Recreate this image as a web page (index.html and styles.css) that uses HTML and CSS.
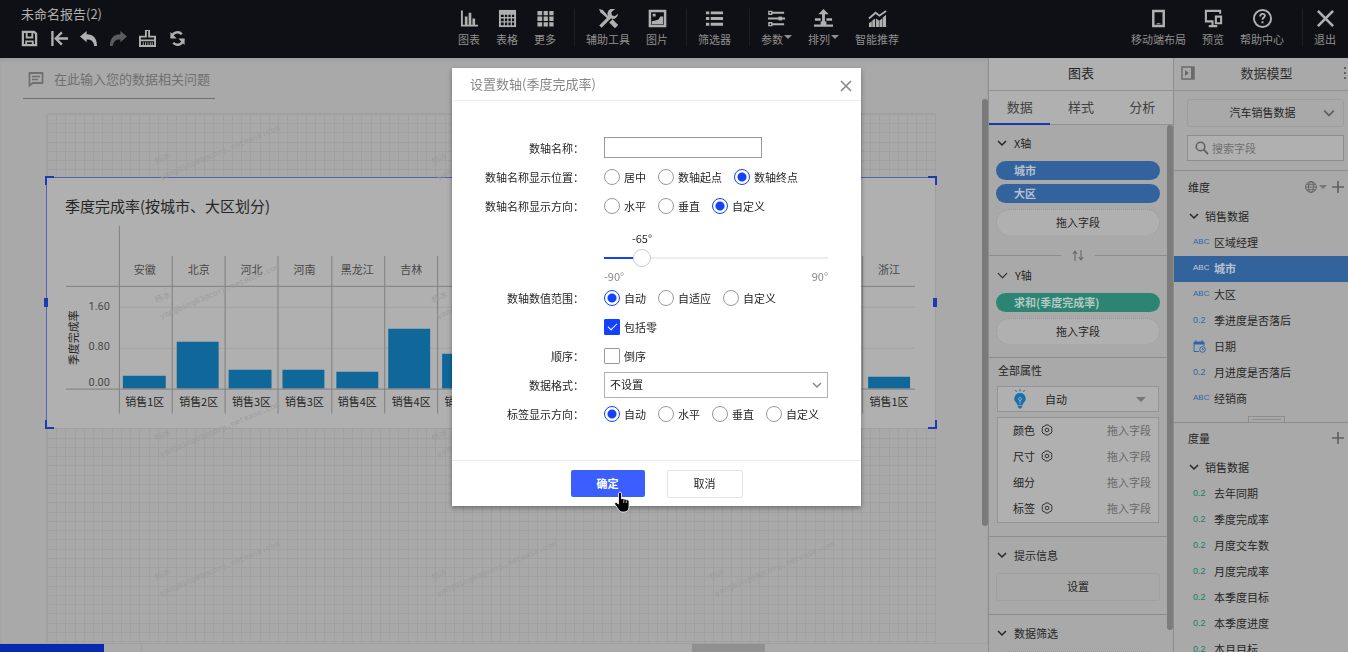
FILE: index.html
```html
<!DOCTYPE html>
<html lang="zh-CN">
<head>
<meta charset="utf-8">
<title>未命名报告(2)</title>
<link rel="stylesheet" href="styles.css">
</head>
<body>
<svg class="defs" aria-hidden="true">
  <symbol id="chev" viewBox="0 0 10 10"><path d="M1 3l4 4 4-4" fill="none" stroke="currentColor" stroke-width="1.500"/></symbol>
  <symbol id="gear" viewBox="0 0 12 12"><g fill="none" stroke="currentColor"><path d="M4.400 1h3.200l.9 1.300 1.600.4.9 2L10.500 6l.5 1.300-.9 2-1.600.4L7.600 11H4.400l-.9-1.300-1.600-.4-.9-2L1.500 6 1 4.700l.9-2 1.600-.4z" stroke-width=".9"/><circle cx="6" cy="6" r="1.800" stroke-width=".9"/></g></symbol>
  <symbol id="cal" viewBox="0 0 13 13"><path d="M1 2h10v2H1zM3 0v3M9 0v3" fill="currentColor" stroke="currentColor"/><path d="M1 4v7.500h5M11 4v2" fill="none" stroke="currentColor"/><circle cx="9.500" cy="9.500" r="2.800" fill="none" stroke="currentColor"/><path d="M9.500 8v1.500H11" fill="none" stroke="currentColor" stroke-width=".8"/></symbol>
</svg>
<div class="app">
  <header class="topbar">
    <div class="report">
      <h1>未命名报告(2)</h1>
      <div class="quick">
        <button aria-label="保存"><svg viewBox="0 0 18 18"><path d="M2 2h12l2 2v12H2z" fill="none" stroke="currentColor" stroke-width="2.400"/><path d="M6 2v6h6V2M5.500 16v-4h7v4" fill="none" stroke="currentColor" stroke-width="2"/></svg></button>
        <button aria-label="回到初始"><svg viewBox="0 0 18 18"><path d="M1.500 1v16M18 9H5M11.500 2.500L5 9l6.500 6.500" fill="none" stroke="currentColor" stroke-width="2.500"/></svg></button>
        <button aria-label="撤销"><svg viewBox="0 0 18 18"><path d="M0 7l7-6v3.500c7 0 11 4 11 12.500h-3C14.500 12 12 10 7 10v3z" fill="currentColor"/></svg></button>
        <button class="dim" aria-label="重做"><svg viewBox="0 0 18 18"><path d="M18 7l-7-6v3.500C4 4.500 0 8.500 0 17h3C3.500 12 6 10 11 10v3z" fill="currentColor"/></svg></button>
        <button aria-label="清空"><svg viewBox="0 0 18 18"><path d="M7.300 0h3.400v7H17v4H1V7h6.300zM1 11h16v6H1z" fill="none" stroke="currentColor" stroke-width="2"/><path d="M4.500 13v3M7 13v3M9.500 13v3M12 13v3M14 13v3" stroke="currentColor"/></svg></button>
        <button aria-label="刷新"><svg viewBox="0 0 18 18"><path d="M3 8.500a6 6 0 0 1 10.500-4M15 9.500a6 6 0 0 1-10.500 4" fill="none" stroke="currentColor" stroke-width="2.600"/><path d="M1.500 2v7h6.500zM16.500 16V9H10z" fill="currentColor"/></svg></button>
      </div>
    </div>
    <nav class="tools">
      <div class="group">
        <button><svg viewBox="0 0 20 20"><path d="M2 1.500v16h17" fill="none" stroke="currentColor" stroke-width="2"/><path d="M6.500 8v9M10.500 4v13M14.500 10v7" stroke="currentColor" stroke-width="2.800"/></svg>图表</button>
        <button><svg viewBox="0 0 20 20"><path d="M1 1h18v18H1z" fill="currentColor"/><path d="M3 6h3v2.500H3zM7.300 6h2.400v2.500H7.300zM11 6h2.400v2.500H11zM14.700 6H17v2.500h-2.300zM3 10h3v2.800H3zM7.300 10h2.400v2.800H7.300zM11 10h2.400v2.800H11zM14.700 10H17v2.800h-2.300zM3 14.300h3V17H3zM7.300 14.300h2.400V17H7.300zM11 14.300h2.400V17H11zM14.700 14.300H17V17h-2.300z" fill="#0f1015"/></svg>表格</button>
        <button><svg viewBox="0 0 20 20"><path d="M1.500 2h5v4.500h-5zM8 2h4.500v4.500H8zM14 2h4.500v4.500H14zM1.500 8h5v4.500h-5zM8 8h4.500v4.500H8zM14 8h4.500v4.500H14zM1.500 14h5v4.500h-5zM8 14h4.500v4.500H8zM14 14h4.500v4.500H14z" fill="currentColor"/></svg>更多</button>
      </div>
      <div class="group">
        <button><svg viewBox="0 0 20 20"><path d="M0 0l4 1 7 8-1.500 1.500-8-7z" fill="currentColor"/><path d="M1.500 18.500L13 7" stroke="currentColor" stroke-width="3.400"/><path d="M12.500 12.500l6 6" stroke="currentColor" stroke-width="5"/><path d="M17 0a5.500 5.500 0 1 0 3 5l-3.500 2.500-3-1-.5-3z" fill="currentColor"/></svg>辅助工具</button>
        <button><svg viewBox="0 0 20 20"><path d="M2 2h16v16H2z" fill="none" stroke="currentColor" stroke-width="2.600"/><path d="M5 5h3v3H5zM4 16v-3l4-1 3-1 2-3h3v8z" fill="currentColor"/></svg>图片</button>
      </div>
      <div class="group">
        <button><svg viewBox="0 0 20 20"><path d="M1 4h3.500M6 4h13M1 10h3.500M6 10h13M1 16h3.500M6 16h13" stroke="currentColor" stroke-width="3"/></svg>筛选器</button>
      </div>
      <div class="group">
        <button><svg viewBox="0 0 20 20"><path d="M5 4h13M1 10h18M5 16h13" stroke="currentColor" stroke-width="2"/><path d="M2 2.500h3v3H2zM2 14.500h3v3H2z" fill="#0f1015" stroke="currentColor" stroke-width="1.500"/><path d="M12 8h4v4h-4z" fill="currentColor"/></svg><span class="more">参数</span></button>
        <button><svg viewBox="0 0 20 20"><path d="M10 0l5.500 5.500h-4V14h-3V5.500h-4z" fill="currentColor"/><path d="M1 11h6M13 11h6M0 17.500h20" stroke="currentColor" stroke-width="2.600"/><path d="M7 13h6v4H7z" fill="currentColor"/></svg><span class="more">排列</span></button>
        <button><svg viewBox="0 0 20 20"><path d="M1 10l7-6 4 3 7-5" fill="none" stroke="currentColor" stroke-width="2"/><path d="M1 19v-4l3-2v6zM4.500 19v-7l3-2v9zM8.500 19v-9l3 2v7zM12 19v-7l3-2v9zM15.500 19V9L19 6v13z" fill="currentColor"/></svg>智能推荐</button>
      </div>
    </nav>
    <div class="tools tools-end">
      <div class="group">
        <button><svg viewBox="0 0 20 20"><path d="M4.500 2h11v16h-11z" fill="none" stroke="currentColor" stroke-width="2.600"/><path d="M8 15.500h4" stroke="currentColor"/></svg>移动端布局</button>
        <button><svg viewBox="0 0 20 20"><path d="M17 5V2H2v11h8M5 18h9M9 13v5" fill="none" stroke="currentColor" stroke-width="2.200"/><path d="M12.500 8h5.500v7h-5.500z" fill="none" stroke="currentColor" stroke-width="2.200"/></svg>预览</button>
        <button><svg viewBox="0 0 20 20"><circle cx="10" cy="10" r="9" fill="none" stroke="currentColor" stroke-width="2"/><path d="M7.500 8c0-4 5-3.500 5-.8 0 1.800-2.500 1.800-2.500 4M10 13v2" fill="none" stroke="currentColor" stroke-width="2"/></svg>帮助中心</button>
      </div>
      <div class="group">
        <button><svg viewBox="0 0 20 20"><path d="M2 2l16 16M18 2L2 18" stroke="currentColor" stroke-width="2.800"/></svg>退出</button>
      </div>
    </div>
  </header>

  <div class="work">
    <main class="stage">
      <label class="ask">
        <svg viewBox="0 0 16 16"><path d="M1.500 2h13v10H5l-3.500 2.500z" fill="none" stroke="currentColor" stroke-width="1.800"/><path d="M4 5.500h8M4 8.500h6" stroke="currentColor" stroke-width="1.500"/></svg>
        <input type="text" placeholder="在此输入您的数据相关问题" aria-label="数据相关问题">
      </label>
      <div class="sheet">
        <section class="widget">
          <h2>季度完成率(按城市、大区划分)</h2>
          <svg class="chart" viewBox="1 0 890 202" role="img" aria-label="季度完成率">
            <g stroke="#a3a3a3"><path d="M73 81.500h798M73 122.500h798"/></g>
            <g fill="#10689a">
              <path d="M77 150h43v13H77zM131 116h42v47h-42zM183 144h43v19h-43zM237 144h42v19h-42zM291 146h42v17h-42zM343 103h42v60h-42zM397 128h42v35h-42zM824 151h42v12h-42z"/>
            </g>
            <g stroke="#808080"><path d="M20 60.500h851M20 163.500h851M73.500 0v188M126.500 30v158M179.500 30v158M232.500 30v158M286.500 30v158M339.500 30v158M392.500 30v158M818.500 30v158" fill="none"/></g>
            <g class="names" text-anchor="middle">
              <text x="99" y="48">安徽</text><text x="153" y="48">北京</text><text x="206" y="48">河北</text><text x="259" y="48">河南</text><text x="312" y="48">黑龙江</text><text x="366" y="48">吉林</text><text x="845" y="48">浙江</text>
            </g>
            <g class="zones" text-anchor="middle">
              <text x="99" y="180">销售1区</text><text x="153" y="180">销售2区</text><text x="206" y="180">销售3区</text><text x="259" y="180">销售3区</text><text x="312" y="180">销售4区</text><text x="366" y="180">销售4区</text><text x="419" y="180">销售1区</text><text x="845" y="180">销售1区</text>
            </g>
            <g class="ticks" text-anchor="end"><text x="64" y="84">1.60</text><text x="64" y="124">0.80</text><text x="64" y="160">0.00</text></g>
            <text class="axis" text-anchor="middle" transform="translate(32 112) rotate(-90)">季度完成率</text>
          </svg>
          <i class="grip tl"></i><i class="grip tr"></i><i class="grip bl"></i><i class="grip br"></i><i class="grip ml"></i><i class="grip mr"></i>
        </section>
        <svg class="marks" aria-hidden="true">
          <defs><g id="wm"><text class="wm-name" transform="translate(9 53) rotate(-23)">杨冰</text><text class="wm-mail" transform="translate(14 69) rotate(-23)">yangbing03@corp.netease.com</text></g></defs>
          <use href="#wm" x="100" y="-3"/><use href="#wm" x="377" y="-3"/><use href="#wm" x="655" y="-3"/>
          <use href="#wm" x="100" y="136"/><use href="#wm" x="377" y="136"/><use href="#wm" x="655" y="136"/>
          <use href="#wm" x="100" y="274"/><use href="#wm" x="377" y="274"/><use href="#wm" x="655" y="274"/>
          <use href="#wm" x="100" y="413"/><use href="#wm" x="377" y="413"/><use href="#wm" x="655" y="413"/>
        </svg>
      </div>
      <div class="sheetbar"><span class="current"></span><span class="sheet-tab"></span><span class="hthumb"></span></div>
      <i class="vthumb"></i>
    </main>

    <aside class="panel config">
      <h2 class="panel-title">图表</h2>
      <div class="tabs" role="tablist"><button class="on" role="tab">数据</button><button role="tab">样式</button><button role="tab">分析</button></div>
      <div class="scroll">
        <section class="axes">
          <h3><svg><use href="#chev"/></svg>X轴</h3>
          <button class="pill">城市</button>
          <button class="pill">大区</button>
          <button class="drop">拖入字段</button>
          <div class="swap"><svg viewBox="0 0 12 11"><path d="M3 11V1.500M.8 4L3 1.200 5.200 4M9 0v9.500M6.800 7L9 9.800 11.200 7" fill="none" stroke="currentColor" stroke-width="1.100"/></svg></div>
          <h3>Y轴</h3>
          <button class="pill measure">求和(季度完成率)</button>
          <button class="drop">拖入字段</button>
        </section>
        <section class="props">
          <h3>全部属性</h3>
          <div class="kind">
            <svg viewBox="0 0 14 20"><path d="M7 4a5.600 5.600 0 0 1 3.300 10.200l-.6 2H4.300l-.6-2A5.600 5.600 0 0 1 7 4z" fill="#1a6fb0"/><path d="M4.500 17h5l-1.500 2.500H6z" fill="#1a6fb0"/><path d="M7 0v2.500M2.500 1l1 2M11.500 1l-1 2" stroke="#1a6fb0"/><path d="M7 15v-4M5.500 10a1.500 1.500 0 1 1 3 0 1.500 1.500 0 0 1-3 0" fill="none" stroke="#b0b0b0" stroke-width=".8"/></svg>
            <select aria-label="图表类型"><option>自动</option></select>
          </div>
          <ul class="marksbox">
            <li>颜色<svg><use href="#gear"/></svg><span>拖入字段</span></li>
            <li>尺寸<svg><use href="#gear"/></svg><span>拖入字段</span></li>
            <li>细分<span>拖入字段</span></li>
            <li>标签<svg><use href="#gear"/></svg><span>拖入字段</span></li>
          </ul>
        </section>
        <section>
          <h3><svg><use href="#chev"/></svg>提示信息</h3>
          <button class="set">设置</button>
        </section>
        <section>
          <h3><svg><use href="#chev"/></svg>数据筛选</h3>
          <button class="drop" aria-label="数据筛选"></button>
        </section>
        <i class="pthumb"></i>
      </div>
    </aside>

    <aside class="panel model">
      <div class="panel-title">
        <svg class="fold" viewBox="0 0 14 14"><path d="M1 1h12v12H1z" fill="none" stroke="currentColor" stroke-width="1.400"/><path d="M10 1h3v12h-3zM4 4l4 3-4 3z" fill="currentColor"/></svg>
        <h2>数据模型</h2>
        <svg class="dots" viewBox="0 0 3 12"><path d="M0 0h2v2H0zM0 5h2v2H0zM0 10h2v2H0z" fill="currentColor"/></svg>
      </div>
      <div class="source">
        <div class="dataset"><select aria-label="数据模型"><option>汽车销售数据</option></select><svg><use href="#chev"/></svg></div>
        <div class="find"><svg viewBox="0 0 14 14"><circle cx="5.500" cy="5.500" r="4.300" fill="none" stroke="currentColor" stroke-width="1.500"/><path d="M8.700 8.700L13 13" stroke="currentColor" stroke-width="1.800"/></svg><input type="search" placeholder="搜索字段" aria-label="搜索字段"></div>
      </div>
      <section class="dims">
        <header><h3>维度</h3>
          <svg class="globe" viewBox="0 0 12 12"><g fill="none" stroke="currentColor" stroke-width=".9"><circle cx="6" cy="6" r="5.400"/><ellipse cx="6" cy="6" rx="2.500" ry="5.400"/><path d="M.6 6h10.800M1.500 3.300h9M1.500 8.700h9"/></g></svg>
          <i class="tri"></i>
          <svg class="plus" viewBox="0 0 12 12"><path d="M6 0v12M0 6h12" stroke="currentColor" stroke-width="1.600"/></svg>
        </header>
        <h4><svg><use href="#chev"/></svg>销售数据</h4>
        <ul>
          <li><b>ABC</b>区域经理</li>
          <li class="sel"><b>ABC</b>城市</li>
          <li><b>ABC</b>大区</li>
          <li><b class="num">0.2</b>季进度是否落后</li>
          <li><b><svg><use href="#cal"/></svg></b>日期</li>
          <li><b class="num">0.2</b>月进度是否落后</li>
          <li><b>ABC</b>经销商</li>
        </ul>
        <i class="handle"></i>
      </section>
      <section class="facts">
        <header><h3>度量</h3><svg class="plus" viewBox="0 0 12 12"><path d="M6 0v12M0 6h12" stroke="currentColor" stroke-width="1.600"/></svg></header>
        <h4><svg><use href="#chev"/></svg>销售数据</h4>
        <ul>
          <li><b class="num">0.2</b>去年同期</li>
          <li><b class="num">0.2</b>季度完成率</li>
          <li><b class="num">0.2</b>月度交车数</li>
          <li><b class="num">0.2</b>月度完成率</li>
          <li><b class="num">0.2</b>本季度目标</li>
          <li><b class="num">0.2</b>本季度进度</li>
          <li><b class="num">0.2</b>本月目标</li>
        </ul>
      </section>
    </aside>
  </div>
</div>

<div class="overlay">
  <form class="dialog" role="dialog" aria-labelledby="dlg-title">
    <header><h2 id="dlg-title">设置数轴(季度完成率)</h2>
      <button type="button" class="close" aria-label="关闭"><svg viewBox="0 0 12 12"><path d="M1 1l10 10M11 1L1 11" stroke="currentColor" stroke-width="1.600"/></svg></button></header>
    <div class="fields">
      <div class="row"><label for="axis-name">数轴名称：</label><div class="ctl"><input id="axis-name" class="name" type="text"></div></div>
      <div class="row"><span>数轴名称显示位置：</span><div class="ctl">
        <label><input type="radio" name="pos">居中</label><label><input type="radio" name="pos">数轴起点</label><label><input type="radio" name="pos" checked>数轴终点</label></div></div>
      <div class="row"><span>数轴名称显示方向：</span><div class="ctl">
        <label><input type="radio" name="dir">水平</label><label><input type="radio" name="dir">垂直</label><label><input type="radio" name="dir" checked>自定义</label></div></div>
      <div class="row slide"><span></span><div class="slider">
        <output for="angle">-65°</output>
        <input id="angle" type="range" min="-90" max="90" value="-65" aria-label="角度">
        <div class="ends"><span>-90°</span><span>90°</span></div></div></div>
      <div class="row"><span>数轴数值范围：</span><div class="ctl">
        <label><input type="radio" name="range" checked>自动</label><label><input type="radio" name="range">自适应</label><label><input type="radio" name="range">自定义</label></div></div>
      <div class="row"><span></span><div class="ctl"><label><input type="checkbox" checked>包括零</label></div></div>
      <div class="row"><span>顺序：</span><div class="ctl"><label><input type="checkbox">倒序</label></div></div>
      <div class="row"><label for="fmt">数据格式：</label><div class="ctl pick"><select id="fmt"><option>不设置</option></select><svg><use href="#chev"/></svg></div></div>
      <div class="row"><span>标签显示方向：</span><div class="ctl">
        <label><input type="radio" name="lab" checked>自动</label><label><input type="radio" name="lab">水平</label><label><input type="radio" name="lab">垂直</label><label><input type="radio" name="lab">自定义</label></div></div>
    </div>
    <footer>
      <div class="okwrap"><button type="button" class="ok">确定</button>
        <svg class="hand" viewBox="0 0 17 22"><path d="M5 1.500c1.500-.8 2.500 0 2.500 1.500v5c.8-.8 2-.7 2.500.3.800-.6 2-.3 2.300.7 1-.5 2.300 0 2.700 1v6c0 3-2 5-5 5H8c-1.500 0-2.500-1-3.500-2.500L1 13.500c-.8-1.300.5-2.500 1.700-1.800L4.500 13V3c0-.7 0-1.200.5-1.500z" fill="#000" stroke="#fff" stroke-width=".8"/><path d="M9.800 8.500V12M12.300 9.500V12" stroke="#fff" stroke-width=".7"/></svg></div>
      <button type="button" class="cancel">取消</button>
    </footer>
  </form>
</div>
</body>
</html>
```
FILE: styles.css
```css
* { box-sizing: border-box; margin: 0; padding: 0; }
html, body { height: 100%; overflow: hidden; }
body { font: 11px/16px "Noto Sans CJK SC", "Noto Sans", sans-serif; color: #262626; background: #a9a9a9; }
button, input, select { font: inherit; color: inherit; background: none; border: 0; border-radius: 0; outline: 0; }
select, input[type=search] { appearance: none; }
h1, h2, h3, h4 { font-weight: 400; font-size: inherit; }
ul { list-style: none; }
svg { display: block; flex: none; }
i { display: block; }
.defs { position: absolute; width: 0; height: 0; }

.app { height: 100vh; display: flex; flex-direction: column; }

/* top bar */
.topbar { flex: none; display: grid; grid-template-columns: 1fr auto 1fr; height: 58px; padding: 0 12px 0 21px; background: #0f1015; color: #b0b0b0; }
.report { padding-top: 4px; }
.report h1 { font-size: 13px; line-height: 20px; }
.quick { display: flex; justify-content: space-between; width: 165px; padding-top: 6px; }
.quick button { width: 17px; height: 17px; }
.quick svg { width: 17px; height: 17px; }
.quick .dim { color: #5c5c5e; }
.tools { display: flex; padding-top: 9px; }
.tools-end { justify-content: flex-end; }
.group { display: flex; align-items: flex-start; gap: 16px; height: 37px; }
.group + .group { padding-left: 11px; margin-left: 18px; border-left: 1px solid #1d1e23; }
.group button { display: flex; flex-direction: column; align-items: center; gap: 3px; color: #8f8f8f; }
.group svg { width: 19px; height: 19px; color: #b0b0b0; }
.more { display: flex; gap: 1px; }
.more::after { content: ""; border: 4px solid transparent; border-top-color: #8f8f8f; border-bottom: 0; height: 4px; margin-top: 4px; }

.work { flex: 1; min-height: 0; display: flex; }

/* report canvas */
.stage { flex: 1; min-width: 0; position: relative; display: flex; flex-direction: column; box-shadow: inset 0 3px 3px #a0a0a0; }
.ask { display: flex; align-items: center; gap: 10px; align-self: flex-start; width: 192px; height: 41px; margin-left: 23px; padding: 2px 0 0 5px; border-bottom: 1px solid #707070; color: #707070; }
.ask svg { width: 16px; height: 16px; }
.ask input { flex: 1; min-width: 0; font-size: 13px; }
::placeholder { color: #707070; opacity: 1; }
.sheet { flex: 1; min-height: 0; position: relative; margin: 14px 52px 0 46px; padding-top: 63px; border: 1px solid #a0a0a0; border-width: 1px 1px 0; border-radius: 3px 3px 0 0;
  background-image: linear-gradient(90deg, #a1a1a1 1px, transparent 1px 9px, #a1a1a1 9px 10px, transparent 10px 18px, #a1a1a1 18px 19px, transparent 19px 28px, #a1a1a1 28px 29px, transparent 29px), linear-gradient(#a1a1a1 1px, transparent 1px 9px, #a1a1a1 9px 10px, transparent 10px 18px, #a1a1a1 18px 19px, transparent 19px 28px, #a1a1a1 28px 29px, transparent 29px);
  background-size: 37px 37px; }
.widget { position: relative; margin: 0 -1px; background: #b0b0b0; border: 1px solid #5064b0; border-right-color: #a0a0a0; border-bottom-color: #a0a0a0; }
.widget h2 { font-size: 15px; line-height: 20px; padding: 18px 18px 10px; }
.chart { width: 100%; height: auto; overflow: visible; }
.chart text { font-size: 11px; fill: #484848; }
.chart .zones text, .chart .axis { fill: #262626; }
.chart .ticks text { font-family: Roboto, sans-serif; font-size: 11px; }
.grip { position: absolute; width: 9px; height: 9px; border: 0 solid #1d3bb0; }
.tl { left: -2px; top: -2px; border-width: 2px 0 0 2px; }
.tr { right: -2px; top: -2px; border-width: 2px 2px 0 0; }
.bl { left: -2px; bottom: -1px; border-width: 0 0 2px 2px; }
.br { right: -2px; bottom: -1px; border-width: 0 2px 2px 0; }
.ml, .mr { width: 4px; background: #1d3bb0; top: 120px; }
.ml { left: -3px; }
.mr { right: -2px; }
.marks { position: absolute; left: 0; top: 0; width: 100%; height: 100%; pointer-events: none; }
.wm-name { font-size: 8px; fill: #9d9d9d; }
.wm-mail { font: 8px "Liberation Mono", monospace; fill: #9d9d9d; }
.sheetbar { flex: none; position: relative; display: flex; height: 9px; border-top: 1px solid #a2a2a2; background: #a9a9a9; }
.current { width: 104px; background: #0629b0; }
.sheet-tab { width: 38px; border-right: 1px solid #a0a0a0; }
.hthumb { position: absolute; left: 70%; width: 73px; height: 9px; background: #909090; }
.vthumb { position: absolute; right: 0; top: 41px; bottom: 126px; width: 6px; border-radius: 3px; background: #7a7a7a; }

/* side panels */
.panel { flex: none; border-left: 1px solid #8d8d8d; overflow: hidden; }
.config { width: 185px; display: flex; flex-direction: column; }
.panel-title { flex: none; height: 33px; line-height: 30px; font-size: 13px; text-align: center; background: #b0b0b0; border-bottom: 1px solid #929292; }
.tabs { flex: none; display: flex; height: 34px; border-bottom: 1px solid #929292; background: #b0b0b0; }
.tabs button { flex: 1; height: 34px; font-size: 13px; color: #404040; padding-bottom: 3px; }
.tabs .on { border-bottom: 2px solid #1935b0; padding-bottom: 1px; }
.scroll { flex: 1; min-height: 0; position: relative; overflow: hidden; }
.scroll section { padding: 8px 13px 13px 7px; border-bottom: 1px solid #8d8d8d; }
.scroll h3 { display: flex; align-items: center; gap: 7px; height: 20px; margin-bottom: 8px; padding: 0 0 1px 1px; }
.scroll h3 svg, h4 svg { width: 10px; height: 10px; }
.axes h3:not(:first-child)::before { content: ""; width: 6px; height: 6px; margin: -3px 2px 0; border: solid; border-width: 0 1px 1px 0; rotate: 45deg; }
.pill, .drop, .set { display: block; width: 100%; }
.pill { height: 19px; margin-bottom: 4px; padding: 0 18px; border-radius: 10px; background: #32639d; color: #b8c0cc; text-align: left; font-weight: 700; line-height: 19px; }
.measure { background: #2c8473; color: #b5c8c4; }
.drop { height: 26px; margin-top: 6px; padding-bottom: 2px; border: 1px dotted #959595; border-width: 1px 1px 0; border-radius: 13px; background: #b0b0b0; }
.pill + .pill { margin-bottom: 0; }
.swap { display: flex; align-items: center; gap: 11px; height: 15px; margin: 13px -7px 2px; color: #686868; }
.swap::before, .swap::after { content: ""; flex: 1; border-top: 1px solid #8d8d8d; }
.swap svg { width: 12px; height: 11px; }
.scroll .props { padding: 3px 14px 13px 8px; }
.scroll .props h3 { margin-bottom: 5px; padding-bottom: 2px; }
.kind { display: flex; align-items: center; height: 26px; border: 1px solid #949494; background: #b0b0b0; }
.kind svg { width: 14px; height: 20px; margin-left: 15px; }
.kind select { flex: 1; height: 24px; padding-left: 18px; }
.kind::after, .tri { content: ""; border: 5px solid transparent; border-top-color: #777; border-bottom: 0; }
.kind::after { margin-right: 12px; }
.marksbox { margin-top: 5px; border: 1px solid #949494; background: #b0b0b0; }
.marksbox li { display: flex; align-items: center; gap: 6px; height: 26px; padding: 0 7px 2px 15px; }
.marksbox svg { width: 12px; height: 12px; }
.marksbox span { margin-left: auto; color: #686868; }
.set { height: 28px; padding-bottom: 2px; border: 1px solid #a0a0a0; border-radius: 3px; }
.pthumb { position: absolute; right: 0; top: 0; bottom: 22px; width: 6px; border-radius: 3px; background: #7c7c7c; }

.model { width: 175px; }
.model .panel-title { display: flex; align-items: center; padding: 0 1px 2px 7px; color: #303030; background: none; }
.model h2 { flex: 1; font-size: 13px; padding-right: 6px; }
.fold { width: 14px; height: 14px; color: #6a6a6a; }
.dots { width: 3px; height: 12px; color: #606060; }
.source { padding: 8px 4px 9px 13px; border-bottom: 1px solid #8d8d8d; }
.dataset, .find { display: flex; align-items: center; border: 1px solid #9e9e9e; }
.dataset { height: 28px; border-radius: 3px; }
.dataset select { flex: 1; height: 26px; padding: 0 0 2px 14px; text-align-last: center; }
.dataset svg { width: 12px; height: 12px; margin-right: 8px; color: #606060; }
.find { height: 26px; margin-top: 8px; background: #b0b0b0; border-color: #8d8d8d; color: #606060; }
.find svg { width: 14px; height: 14px; margin: 0 3px 0 7px; }
.find input { flex: 1; min-width: 0; height: 24px; }
.dims { position: relative; padding-bottom: 10px; border-bottom: 1px solid #8d8d8d; }
.model section header { display: flex; align-items: center; height: 33px; padding: 0 4px 2px 14px; }
.model .facts header { height: 32px; }
.model header h3 { flex: 1; }
.globe { width: 12px; height: 12px; color: #606060; }
.model .tri { border-width: 4px 4px 0; margin: 0 5px 0 2px; }
.plus { width: 12px; height: 12px; color: #606060; }
.model h4 { display: flex; align-items: center; gap: 6px; height: 26px; padding: 0 0 2px 15px; }
.model li { display: flex; align-items: center; height: 26px; padding: 0 0 2px 19px; }
.model li b { width: 21px; color: #2b68ad; font: 8px/16px "Liberation Sans", sans-serif; }
.model li .num { font-size: 9px; }
.model li svg { width: 13px; height: 13px; }
.facts li b.num { color: #168066; }
.model .sel { background: #32639d; color: #b8c0cc; font-weight: 700; }
.model .sel b { color: #c0c8d2; }
.handle { position: absolute; left: 74px; bottom: 0; width: 37px; height: 6px; border: 1px solid #8d8d8d; border-bottom: 0; }
.handle::after { content: ""; display: block; margin: 2px 3px; border-top: 1px solid #8d8d8d; }

/* dialog */
.overlay { position: fixed; inset: 0; display: flex; justify-content: center; align-items: flex-start; padding: 68px 35px 0 0; }
.dialog { width: 409px; background: #fff; box-shadow: 0 2px 5px rgba(0,0,0,.35); }
.dialog header { display: flex; justify-content: space-between; height: 33px; padding: 0 9px 0 18px; border-bottom: 1px solid #ececec; color: #888; }
.dialog header h2 { font-size: 13px; line-height: 32px; }
.close { display: flex; align-items: center; padding-top: 4px; color: #888; }
.close svg { width: 12px; height: 12px; }
.fields { display: flex; flex-direction: column; padding: 32px 33px 32px 0; }
.row { display: grid; grid-template-columns: 127px 1fr; column-gap: 25px; align-items: center; min-height: 29px; }
.row > :first-child { text-align: right; white-space: nowrap; margin-right: -5px; }
.ctl { display: flex; align-items: center; gap: 12px; white-space: nowrap; }
.ctl label { display: flex; align-items: center; gap: 4px; }
.name { width: 158px; height: 21px; border: 1px solid #999; padding: 0 4px; }
.ctl input[type=radio], .ctl input[type=checkbox] { appearance: none; width: 16px; height: 16px; border: 1px solid #999; background: #fff; }
.ctl input[type=radio] { border-radius: 50%; }
.ctl input[type=radio]:checked { border-color: #1241ff; background: radial-gradient(circle, #1241ff 4px, #fff 5px); }
.ctl input[type=checkbox] { border-radius: 1px; }
.ctl input[type=checkbox]:checked { border-color: #1241ff; background: #1241ff; display: grid; place-items: center; }
.ctl input[type=checkbox]:checked::after { content: ""; width: 8px; height: 4px; border: solid #fff; border-width: 0 0 1px 1px; rotate: -45deg; margin-bottom: 3px; }
.slide { height: 63px; }
.slider { display: flex; flex-direction: column; padding-top: 8px; }
.slider output { width: 76px; text-align: center; }
.slider input { appearance: none; width: 100%; height: 24px; background: linear-gradient(#1241ff, #1241ff) left center / 37px 2px no-repeat, linear-gradient(#ececec, #ececec) center / 100% 2px no-repeat; }
.slider input::-webkit-slider-thumb { appearance: none; width: 18px; height: 18px; border: 1px solid #ccc; border-radius: 50%; background: #fff; }
.ends { display: flex; justify-content: space-between; color: #888; line-height: 12px; }
.pick { position: relative; }
.pick select { flex: 1; height: 26px; padding: 0 5px 2px; border: 1px solid #b0b0b0; }
.pick svg { position: absolute; right: 6px; width: 10px; height: 10px; color: #888; pointer-events: none; }
.dialog footer { display: flex; justify-content: center; gap: 22px; height: 46px; padding-top: 9px; border-top: 1px solid #ececec; }
.okwrap { position: relative; }
.ok, .cancel { height: 27px; padding-bottom: 2px; border-radius: 2px; }
.ok { width: 74px; background: #3b5fff; color: #fff; font-weight: 700; }
.cancel { width: 76px; height: 28px; border: 1px solid #e4e4e4; }
.hand { position: absolute; left: 43px; top: 21px; width: 17px; height: 22px; }
```
